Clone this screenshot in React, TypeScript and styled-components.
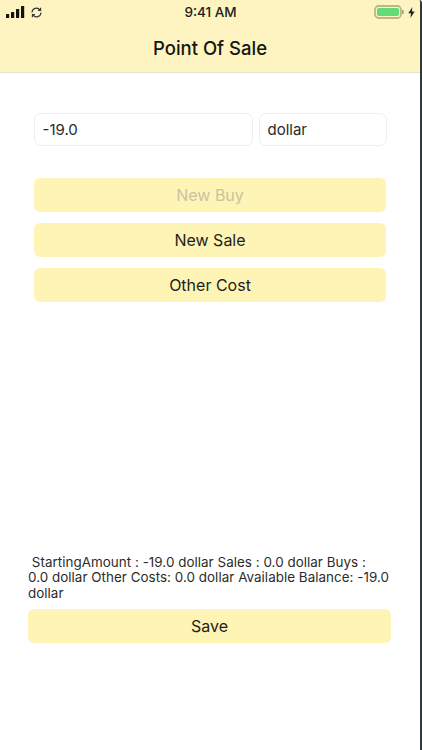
import React from "react";
import styled, { createGlobalStyle } from "styled-components";

const Global = createGlobalStyle`
  html, body { margin: 0; padding: 0; background: #fff; }
  body { font-family: Inter, "Liberation Sans", sans-serif; color: #1c1c1a; }
  * { box-sizing: border-box; }
`;

const Phone = styled.div`
  width: 422px;
  height: 750px;
  display: flex;
  flex-direction: column;
  background: #fff;
  border-right: 2px solid #2f3a3a;
  border-top-right-radius: 3px;
  overflow: hidden;
`;

const Header = styled.header`
  height: 73px;
  flex: none;
  background: #fdf4c1;
  border-bottom: 1px solid #e6e2cc;
  display: flex;
  flex-direction: column;
`;

const StatusBar = styled.div`
  height: 24px;
  display: grid;
  grid-template-columns: 1fr auto 1fr;
  align-items: center;
  padding: 0 5px 0 6px;
  font-size: 13.5px;
  font-weight: 500;
  color: #222;
`;

const StatusLeft = styled.div`
  display: flex;
  align-items: center;
  gap: 5px;
`;

const StatusRight = styled.div`
  display: flex;
  align-items: center;
  justify-content: flex-end;
  gap: 4px;
`;

const Title = styled.h1`
  margin: 0;
  flex: 1;
  display: flex;
  align-items: center;
  justify-content: center;
  padding-bottom: 1px;
  font-size: 18.5px;
  font-weight: 500;
  color: #16160f;
`;

const Form = styled.main`
  display: flex;
  flex-direction: column;
  padding: 40px 34px 0 34px;
`;

const InputRow = styled.div`
  display: flex;
  gap: 6px;
  margin-right: -1px;
  margin-bottom: 32px;
`;

const Field = styled.div<{ $width: number }>`
  width: ${(p) => p.$width}px;
  height: 33px;
  display: flex;
  align-items: center;
  padding: 0 7.5px;
  border: 1px solid #eeeeea;
  border-radius: 7px;
  font-size: 15px;
  color: #2a2a28;
`;

const Actions = styled.div`
  display: flex;
  flex-direction: column;
  gap: 11px;
`;

const ActionButton = styled.button<{ $disabled?: boolean }>`
  height: 34px;
  width: 100%;
  border: 0;
  border-radius: 6px;
  background: #fef4b5;
  font-family: inherit;
  font-size: 16px;
  color: ${(p) => (p.$disabled ? "#c9c3a0" : "#1f1f1a")};
`;

const Footer = styled.footer`
  margin-top: auto;
  display: flex;
  flex-direction: column;
  padding: 0 29px 107px 28px;
`;

const Summary = styled.p`
  margin: 0 0 8px;
  font-size: 13.4px;
  letter-spacing: 0.04px;
  line-height: 15.5px;
  color: #2c2c2a;
`;

const SaveButton = styled(ActionButton)`
  width: auto;
`;

const Signal = () => (
  <svg width="19" height="12" viewBox="0 0 19 12">
    <g fill="#111">
      <rect x="0" y="8" width="3.2" height="4" rx="0.6" />
      <rect x="5" y="6" width="3.2" height="6" rx="0.6" />
      <rect x="10" y="3" width="3.2" height="9" rx="0.6" />
      <rect x="15" y="0" width="3.2" height="12" rx="0.6" />
    </g>
  </svg>
);

const Sync = () => (
  <svg width="13" height="13" viewBox="0 0 13 13" fill="none" stroke="#333" strokeWidth="1.1">
    <path d="M2 6.5A4.5 4.5 0 0 1 10 3.8" />
    <path d="M10.6 1.8V4.4H8" />
    <path d="M11 6.5A4.5 4.5 0 0 1 3 9.2" />
    <path d="M2.4 11.2V8.6H5" />
  </svg>
);

const Battery = () => (
  <svg width="30" height="14" viewBox="0 0 30 14">
    <rect x="1" y="1" width="26" height="12" rx="3.5" fill="none" stroke="#bcb78a" strokeWidth="1.8" />
    <rect x="3" y="3" width="22" height="8" rx="1.8" fill="#63dc76" />
    <rect x="28.2" y="5" width="1.4" height="4" rx="0.7" fill="#8f8c70" />
  </svg>
);

const Bolt = () => (
  <svg width="7" height="11" viewBox="0 0 7 12" preserveAspectRatio="none">
    <path d="M4.4 0 0.3 6.8H3L2.4 12 6.7 4.9H3.9Z" fill="#222" />
  </svg>
);

export default function App() {
  return (
    <>
      <Global />
      <Phone>
        <Header>
          <StatusBar>
            <StatusLeft>
              <Signal />
              <Sync />
            </StatusLeft>
            <span>9:41 AM</span>
            <StatusRight>
              <Battery />
              <Bolt />
            </StatusRight>
          </StatusBar>
          <Title>Point Of Sale</Title>
        </Header>
        <Form>
          <InputRow>
            <Field $width={219}>-19.0</Field>
            <Field $width={128}>dollar</Field>
          </InputRow>
          <Actions>
            <ActionButton $disabled>New Buy</ActionButton>
            <ActionButton>New Sale</ActionButton>
            <ActionButton>Other Cost</ActionButton>
          </Actions>
        </Form>
        <Footer>
          <Summary>
            &nbsp;StartingAmount : -19.0 dollar Sales : 0.0 dollar Buys :<br />
            0.0 dollar Other Costs: 0.0 dollar Available Balance: -19.0 dollar
          </Summary>
          <SaveButton>Save</SaveButton>
        </Footer>
      </Phone>
    </>
  );
}
